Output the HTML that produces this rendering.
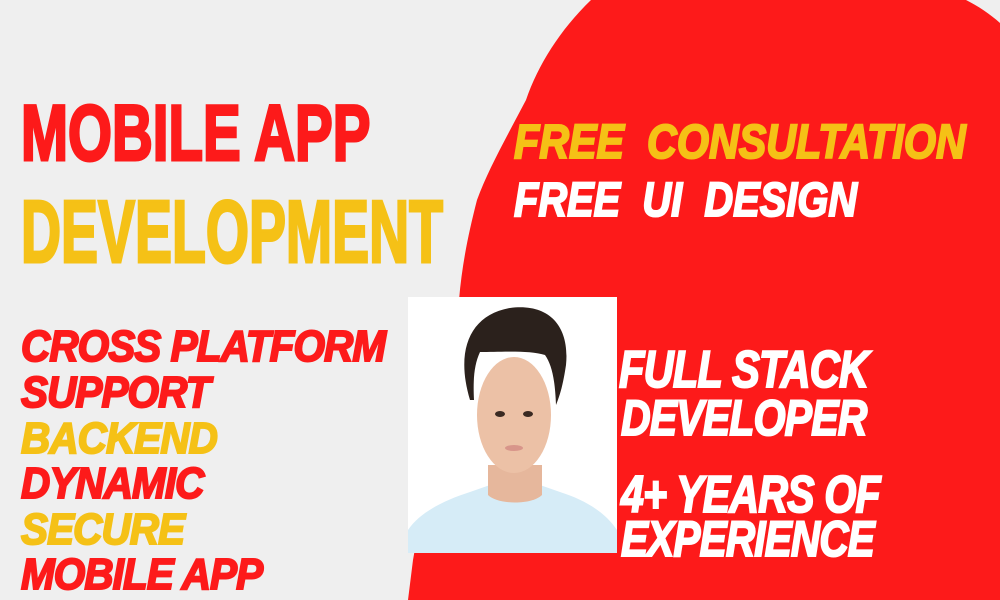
<!DOCTYPE html>
<html><head><meta charset="utf-8"><style>
html,body{margin:0;padding:0}
body{width:1000px;height:600px;position:relative;overflow:hidden;background:#efefef;font-family:"Liberation Sans",sans-serif;font-weight:bold}
.t{position:absolute;white-space:nowrap;line-height:1;transform-origin:0 0;-webkit-text-stroke:2px currentColor}
.big{-webkit-text-stroke:3px currentColor}
.r{color:#fd1a1a}.y{color:#f5c116}.w{color:#fff}
.i{font-style:italic}
</style></head><body>
<svg style="position:absolute;left:0;top:0" width="1000" height="600">
<path d="M591,0 C560,30 538,65 526,100 C505,140 488,170 477,200 C468,235 462,265 459,300 L413,560 L408,600 L1000,600 L1000,23 C990,14 978,6 966,0 Z" fill="#fd1a1a"/>
<rect x="408" y="297" width="209" height="256" fill="#fff"/>
<path d="M408,553 L408,530 C420,512 445,500 470,492 L490,485 L540,485 L560,492 C585,500 605,512 617,530 L617,553 Z" fill="#d6ecf7"/>
<path d="M488,465 L488,495 C498,505 532,505 542,495 L542,465 Z" fill="#e6b79c"/>
<ellipse cx="514" cy="415" rx="37" ry="58" fill="#ecc1a6"/>
<path d="M470,400 C455,350 470,315 510,308 C548,303 570,325 566,365 C563,385 560,395 556,405 C555,380 552,365 545,355 C530,350 500,352 480,352 C474,365 473,380 474,400 Z" fill="#2b211c"/>
<ellipse cx="500" cy="414" rx="5" ry="3" fill="#3a2a22"/>
<ellipse cx="528" cy="414" rx="5" ry="3" fill="#3a2a22"/>
<ellipse cx="514" cy="448" rx="9" ry="3" fill="#d8958a"/>
</svg>
<div class="t r big" style="left:21px;top:93px;font-size:79px;transform:scaleX(0.715)">MOBILE APP</div>
<div class="t y big" style="left:21px;top:188px;font-size:88px;transform:scaleX(0.63)">DEVELOPMENT</div>
<div class="t y i" style="left:514px;top:119px;font-size:48px;transform:scaleX(0.86)">FREE&nbsp; CONSULTATION</div>
<div class="t w i" style="left:514px;top:177px;font-size:48px;transform:scaleX(0.83)">FREE&nbsp; UI&nbsp; DESIGN</div>
<div class="t r i" style="left:21px;top:325px;font-size:44px;transform:scaleX(0.92);letter-spacing:-1px">CROSS PLATFORM</div>
<div class="t r i" style="left:21px;top:371px;font-size:44px;transform:scaleX(0.92);letter-spacing:-1px">SUPPORT</div>
<div class="t y i" style="left:21px;top:417px;font-size:44px;transform:scaleX(0.92);letter-spacing:-1px">BACKEND</div>
<div class="t r i" style="left:21px;top:462px;font-size:44px;transform:scaleX(0.92);letter-spacing:-1px">DYNAMIC</div>
<div class="t y i" style="left:21px;top:508px;font-size:44px;transform:scaleX(0.92);letter-spacing:-1px">SECURE</div>
<div class="t r i" style="left:21px;top:553px;font-size:44px;transform:scaleX(0.92);letter-spacing:-1px">MOBILE APP</div>
<div class="t w i" style="left:619px;top:344px;font-size:52px;transform:scaleX(0.8);letter-spacing:-1px">FULL STACK</div>
<div class="t w i" style="left:621px;top:393px;font-size:50px;transform:scaleX(0.82);letter-spacing:-1px">DEVELOPER</div>
<div class="t w i" style="left:621px;top:469px;font-size:52px;transform:scaleX(0.79);letter-spacing:-1px">4+ YEARS OF</div>
<div class="t w i" style="left:621px;top:514px;font-size:50px;transform:scaleX(0.81);letter-spacing:-1px">EXPERIENCE</div>
</body></html>
